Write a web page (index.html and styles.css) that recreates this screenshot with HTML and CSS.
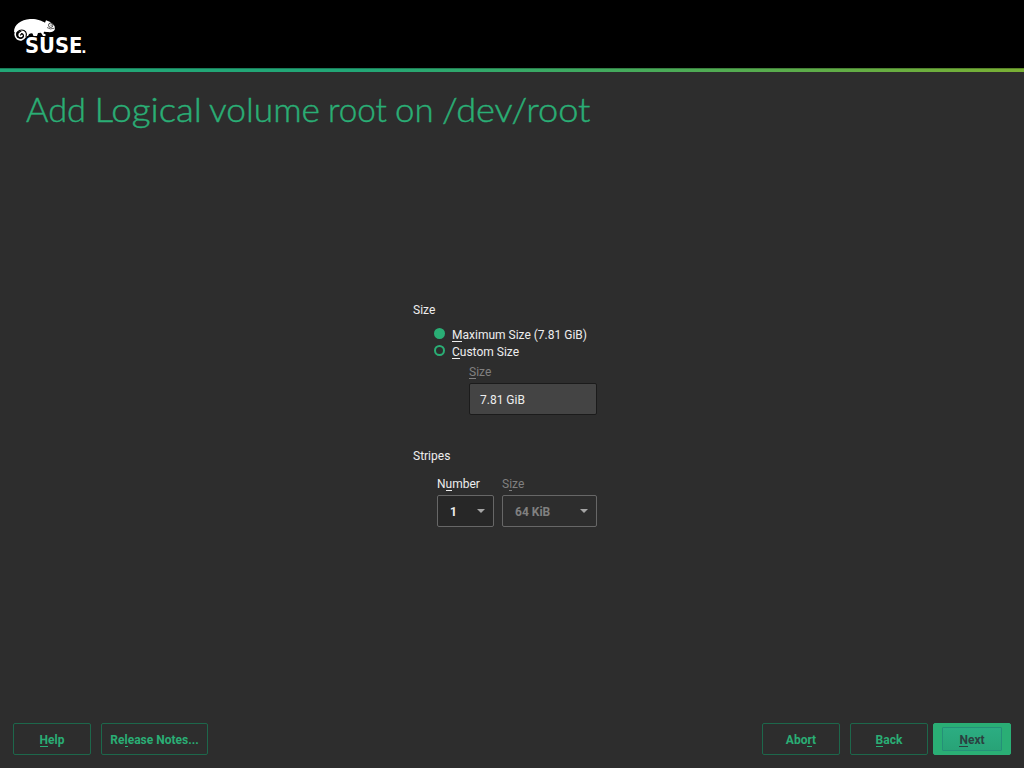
FILE: index.html
```html
<!DOCTYPE html>
<html lang="en">
<head>
<meta charset="utf-8">
<title>Add Logical volume</title>
<link rel="stylesheet" href="styles.css">
</head>
<body>
<header class="banner">
  <svg class="logo" width="90" height="48" viewBox="0 0 90 48" role="img" aria-label="SUSE">
    <path fill="#fff" d="M1 15C1 7 8 3 17 2C23 1.5 29 3.5 32 5.8L33 3.2Q37 4.2 40 7.2Q42 8.5 42 12C41 15 38 15.4 34 15L31 14.8L30.5 16.5L32.5 17.3V19H30L28 15.7L25 16L24 19H20.5L19.5 16.5Q16 15.5 15 19H11.500L8 14Z"/>
    <path d="M12.7 19.5C15 15.5 12.5 11.5 8.5 11.5C4.5 11.5 2 14.5 2.2 17.5C2.5 21.5 5.5 23.3 8.8 22.6C12 22 12.5 18.5 11 16.8C9 14.8 6 16 6.2 18.2C6.4 20 8.7 20 9 18.5" fill="none" stroke="#fff" stroke-width="1.8" stroke-linecap="round"/>
    <path d="M13 20C14.5 15.5 12 13 8.7 13C5 13 3.4 16 3.9 18.3C4.5 21 8.5 22.2 10.2 19.8C11.2 17.8 9.5 16.2 8 16.7" fill="none" stroke="#000" stroke-width="1.1"/>
    <circle cx="37.7" cy="8.2" r="2.2" fill="#fff" stroke="#000" stroke-width=".7"/>
    <circle cx="38.1" cy="8.1" r=".6"/>
    <path d="M34 10.5Q37 13 41.5 11.2" fill="none" stroke="#000" stroke-width=".6"/>
    <text class="wordmark" y="35.5"><tspan x="12" textLength="57.5" lengthAdjust="spacingAndGlyphs">SUSE</tspan><tspan class="point" x="68.3">.</tspan></text>
  </svg>
</header>
<div class="stripe"></div>
<h1 class="title">
  <svg width="600" height="40" viewBox="0 0 600 40">
    <text y="32">
      <tspan x="0" textLength="60" lengthAdjust="spacingAndGlyphs">Add</tspan>
      <tspan x="68.500" textLength="107.500" lengthAdjust="spacingAndGlyphs">Logical</tspan>
      <tspan x="183" textLength="111" lengthAdjust="spacingAndGlyphs">volume</tspan>
      <tspan x="302" textLength="59" lengthAdjust="spacingAndGlyphs">root</tspan>
      <tspan x="369" textLength="38.500" lengthAdjust="spacingAndGlyphs">on</tspan>
      <tspan x="416" textLength="148.500" lengthAdjust="spacingAndGlyphs">/dev/root</tspan>
    </text>
  </svg>
</h1>
<main class="form">
  <div class="caption">Size</div>
  <div class="radios">
    <div class="radio"><span class="dot on"></span><span><u>M</u>aximum Size (7.81 GiB)</span></div>
    <div class="radio"><span class="dot"></span><span><u>C</u>ustom Size</span></div>
  </div>
  <div class="custom">
    <div class="label dim"><u>S</u>ize</div>
    <div class="input">7.81 GiB</div>
  </div>
  <div class="caption stripes">Stripes</div>
  <div class="selects">
    <div class="field number">
      <div class="label">N<u>u</u>mber</div>
      <div class="select">1<span class="arrow"></span></div>
    </div>
    <div class="field size">
      <div class="label dim">S<u>i</u>ze</div>
      <div class="select disabled">64 KiB<span class="arrow"></span></div>
    </div>
  </div>
</main>
<footer class="buttons">
  <div class="button"><span><u>H</u>elp</span></div>
  <div class="button notes"><span>Re<u>l</u>ease Notes...</span></div>
  <div class="button abort"><span>Abo<u>r</u>t</span></div>
  <div class="button back"><span><u>B</u>ack</span></div>
  <div class="button next"><div class="focus"><span><u>N</u>ext</span></div></div>
</footer>
</body>
</html>
```

FILE: styles.css
```css
* { box-sizing: border-box; }
body {
  margin: 0;
  width: 1024px;
  height: 768px;
  overflow: hidden;
  display: flex;
  flex-direction: column;
  background: #2d2d2d;
  color: #eee;
  font: 12px/14px Roboto, sans-serif;
}
.banner { height: 68px; padding: 17px 0 0 13px; background: #000; }
.logo { display: block; overflow: visible; }
.wordmark { font: 700 20.5px "DejaVu Sans", sans-serif; fill: #fff; }
.point { font-size: 14px; }
.stripe {
  height: 4px;
  background: linear-gradient(90deg, #22a777 0%, #22a777 35%, #7ab034 100%);
  border-top: 1px solid rgba(0, 0, 0, .25);
  background-origin: border-box;
}
.title {
  margin: 18px 0 0 26px;
  height: 40px;
  font: 300 32.5px/40px Lato, sans-serif;
}
.title svg { display: block; overflow: visible; fill: #2aae75; stroke: #2aae75; stroke-width: .45px; }
.form { width: 184px; margin: 173px 0 0 413px; flex: 1; }
u { text-decoration: none; background: linear-gradient(currentColor, currentColor) 0 100% / 100% 1px no-repeat; }
.caption { height: 14px; }
.radios { margin: 11px 0 0 21px; }
.radio { display: flex; gap: 7px; height: 17px; white-space: nowrap; }
.dot { width: 11px; height: 11px; border: 2px solid #2aae75; border-radius: 50%; }
.dot.on { background: #2aae75; }
.custom { margin: 3px 0 0 56px; }
.label { height: 14px; }
.dim { color: #808080; }
.input {
  height: 32px;
  margin-top: 4px;
  padding: 0 10px;
  border: 1px solid #1b1b1b;
  border-radius: 2px;
  background: #444;
  line-height: 32px;
}
.stripes { margin-top: 34px; }
.selects { display: flex; gap: 8px; margin: 14px 0 0 24px; }
.number { width: 57px; }
.size { width: 95px; }
.select {
  display: flex;
  align-items: center;
  justify-content: space-between;
  height: 32px;
  margin-top: 4px;
  padding: 1px 8px 0 12px;
  border: 1px solid #676767;
  border-radius: 2px;
  background: #272727;
  font-weight: 700;
}
.disabled { background: #2d2d2d; color: #808080; }
.arrow { border: 4px solid transparent; border-top-color: #a5a5a5; border-bottom: 0; margin-bottom: 2px; }
.buttons { display: flex; height: 45px; padding: 0 13px; }
.button {
  display: flex;
  align-items: center;
  justify-content: center;
  width: 78px;
  height: 32px;
  padding-top: 2px;
  border: 1px solid #1d674b;
  border-radius: 2px;
  color: #2aae75;
  font-weight: 700;
}
.notes { width: 107px; margin-left: 10px; }
.abort { margin-left: auto; }
.back { margin: 0 5px 0 10px; }
.next { padding: 0; border-color: #2aae75; background: #2aae75; color: #2b4040; }
.focus {
  display: flex;
  align-items: center;
  justify-content: center;
  width: 60px;
  height: 24px;
  padding-top: 2px;
  border: 1px solid #259078;
  border-radius: 1px;
  background: linear-gradient(#2cad82, #28a377);
}
```
